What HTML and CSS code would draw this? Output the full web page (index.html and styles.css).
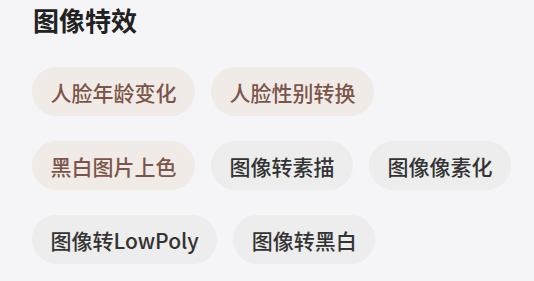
FILE: index.html
```html
<!DOCTYPE html>
<html lang="zh">
<head>
<meta charset="utf-8">
<link rel="stylesheet" href="styles.css">
</head>
<body>
<section class="panel">
  <h2 class="title">图像特效</h2>
  <div class="chips">
    <span class="chip warm">人脸年龄变化</span>
    <span class="chip warm">人脸性别转换</span>
    <span class="chip warm">黑白图片上色</span>
    <span class="chip">图像转素描</span>
    <span class="chip">图像像素化</span>
    <span class="chip">图像转LowPoly</span>
    <span class="chip">图像转黑白</span>
  </div>
</section>
</body>
</html>
```

FILE: styles.css
```css
html, body {
  margin: 0;
  padding: 0;
  background: #f5f5f7;
}
body {
  font-family: "Noto Sans CJK SC", "Noto Sans", sans-serif;
  width: 534px;
  height: 281px;
  overflow: hidden;
}
.panel {
  padding: 0 0 0 32px;
}
.title {
  margin: 0 0 0 1px;
  font-size: 26px;
  line-height: 40px;
  font-weight: 700;
  color: #222222;
}
.chips {
  margin-top: 27px;
  display: flex;
  flex-wrap: wrap;
  column-gap: 16px;
  row-gap: 25px;
  width: 490px;
}
.chip {
  display: inline-flex;
  align-items: center;
  height: 49px;
  padding: 0 18.5px;
  border-radius: 25px;
  background: #ededed;
  color: #333333;
  font-size: 21px;
  font-weight: 500;
  box-sizing: border-box;
}
.chip.warm {
  background: #f1ebe8;
  color: #7b5548;
}
```
